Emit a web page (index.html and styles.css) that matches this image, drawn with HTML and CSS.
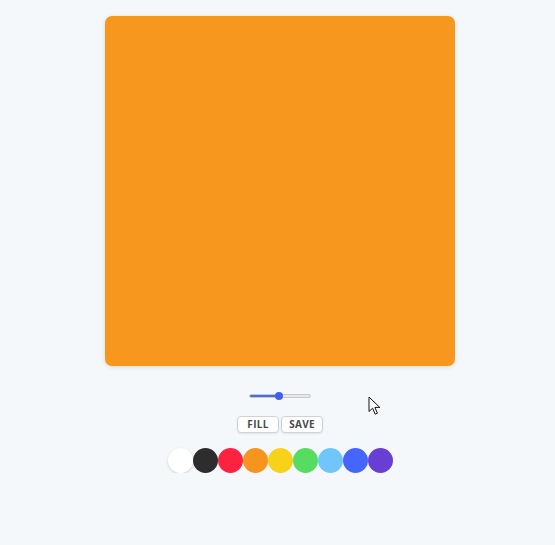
FILE: index.html
```html
<!DOCTYPE html>
<html>
<head>
<meta charset="utf-8">
<link rel="stylesheet" href="styles.css">
</head>
<body>
<main class="app">
  <div class="canvas"></div>
  <div class="slider-row">
    <input class="size" type="range" min="0" max="100" value="48">
  </div>
  <div class="buttons">
    <button class="btn">FILL</button>
    <button class="btn">SAVE</button>
  </div>
  <div class="swatches">
    <span class="sw white"></span>
    <span class="sw black"></span>
    <span class="sw red"></span>
    <span class="sw orange"></span>
    <span class="sw yellow"></span>
    <span class="sw green"></span>
    <span class="sw sky"></span>
    <span class="sw blue"></span>
    <span class="sw purple"></span>
  </div>
</main>
<svg class="cursor" width="14" height="20" viewBox="0 0 14 20">
  <path d="M1 1 L1 15.5 L4.6 12.2 L7.2 18.2 L9.4 17.2 L6.9 11.4 L11.8 11.4 Z" fill="#fff" stroke="#111" stroke-width="1" stroke-linejoin="round"/>
</svg>
</body>
</html>
```
FILE: styles.css
```css
html, body {
  margin: 0;
  padding: 0;
  background: #f4f8fb;
  font-family: "Open Sans", "Noto Sans", sans-serif;
}
.app {
  display: flex;
  flex-direction: column;
  align-items: center;
  padding: 16px 0 0 5px;
}
.canvas {
  width: 350px;
  height: 350px;
  background: #f8971d;
  border-radius: 7px;
  box-shadow: 0 1px 4px rgba(0,0,0,0.12);
}
.slider-row {
  margin-top: 25px;
  height: 10px;
  display: flex;
  align-items: center;
}
.size {
  -webkit-appearance: none;
  appearance: none;
  width: 62px;
  height: 4px;
  margin: 0;
  border-radius: 2px;
  background: linear-gradient(to right, #4a66ee 0 48%, #e8e8e8 48% 100%);
  border: 1px solid #c9c9c9;
  box-sizing: border-box;
  outline: none;
}
.size::-webkit-slider-thumb {
  -webkit-appearance: none;
  width: 8px;
  height: 8px;
  border-radius: 50%;
  background: #3f5ff2;
  border: none;
}
.buttons {
  display: flex;
  gap: 2px;
  margin-top: 15px;
}
.btn {
  width: 42px;
  height: 17px;
  padding: 0;
  border: 1px solid #cfd3d8;
  border-radius: 4px;
  background: #fff;
  color: #4a4a4a;
  font-family: "Open Sans", sans-serif;
  font-weight: 700;
  font-size: 10px;
  letter-spacing: 0.3px;
  line-height: 15px;
  box-shadow: 0 1px 2px rgba(0,0,0,0.08);
}
.swatches {
  display: flex;
  margin-top: 15px;
}
.sw {
  width: 25px;
  height: 25px;
  border-radius: 50%;
}
.white { background: #ffffff; box-shadow: 0 1px 3px rgba(0,0,0,0.15); }
.black { background: #2d2d2d; }
.red { background: #fb2340; }
.orange { background: #f7941d; }
.yellow { background: #f8d21a; }
.green { background: #56dc60; }
.sky { background: #70c6fb; }
.blue { background: #4466fd; }
.purple { background: #673fd4; }
.cursor {
  position: absolute;
  left: 368px;
  top: 396px;
}
```
